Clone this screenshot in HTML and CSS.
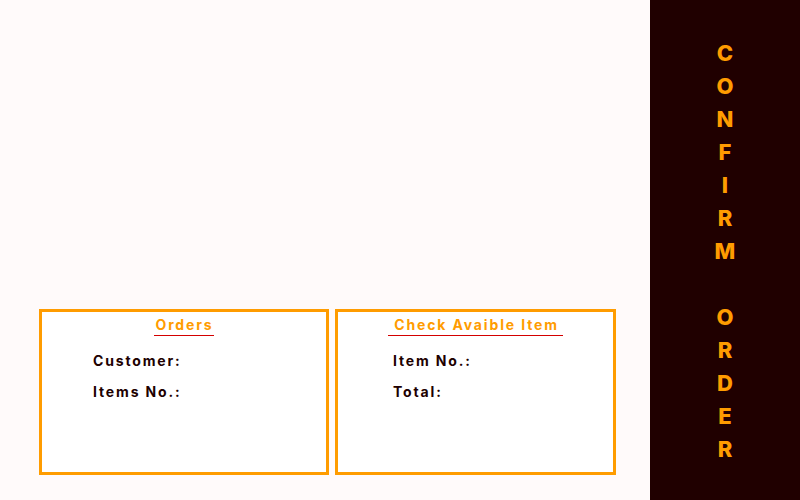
FILE: index.html
```html
<!DOCTYPE html>
<html>
<head>
<meta charset="utf-8">
<link rel="stylesheet" href="styles.css">
</head>
<body>
<div class="page">
  <main class="main">
    <div class="boxes">
      <section class="box box-orders">
        <div class="box-head"><h2 class="box-title">Orders</h2></div>
        <div class="fields fields-orders">
          <div class="field">Customer:</div>
          <div class="field">Items No.:</div>
        </div>
      </section>
      <section class="box box-check">
        <div class="box-head"><h2 class="box-title">Check Avaible Item</h2></div>
        <div class="fields fields-check">
          <div class="field">Item No.:</div>
          <div class="field">Total:</div>
        </div>
      </section>
    </div>
  </main>
  <aside class="side">
    <h1 class="side-title">CONFIRM ORDER</h1>
  </aside>
</div>
</body>
</html>
```

FILE: styles.css
```css
* { box-sizing: border-box; }
html, body { margin: 0; padding: 0; }
body {
  background: #fffafa;
  font-family: Inter, "Open Sans", sans-serif;
  width: 800px;
  height: 500px;
  overflow: hidden;
}
.page {
  display: flex;
  width: 800px;
  height: 500px;
}
.main {
  flex: 0 0 650px;
  display: flex;
  flex-direction: column;
  justify-content: flex-end;
  padding: 0 0 25px 39px;
}
.boxes {
  display: flex;
  gap: 6px;
}
.box {
  height: 166px;
  border: 3px solid #ff9c00;
  background: #ffffff;
}
.box-orders { width: 290px; }
.box-check { width: 281px; }
.box-head {
  display: flex;
  justify-content: center;
  padding-top: 3px;
}
.box-title {
  margin: 0;
  font-size: 14px;
  line-height: 20px;
  font-weight: 700;
  color: #ff9c00;
  letter-spacing: 1.85px;
  border-bottom: 1px solid #d40000;
  padding: 0 1px 0 2px;
}
.box-check .box-title { padding: 0 4px 0 6px; }
.fields {
  display: flex;
  flex-direction: column;
  gap: 11px;
  padding-top: 15px;
}
.fields-orders { padding-left: 51px; }
.fields-check { padding-left: 55px; }
.field {
  font-size: 14px;
  line-height: 20px;
  font-weight: 700;
  color: #200000;
  letter-spacing: 1.85px;
}
.side {
  flex: 0 0 150px;
  background: #200000;
  display: flex;
  justify-content: center;
  padding-top: 40px;
}
.side-title {
  margin: 0;
  writing-mode: vertical-lr;
  text-orientation: upright;
  font-size: 22px;
  line-height: 40px;
  font-weight: 800;
  color: #ff9c00;
  letter-spacing: 7px;
}
```
